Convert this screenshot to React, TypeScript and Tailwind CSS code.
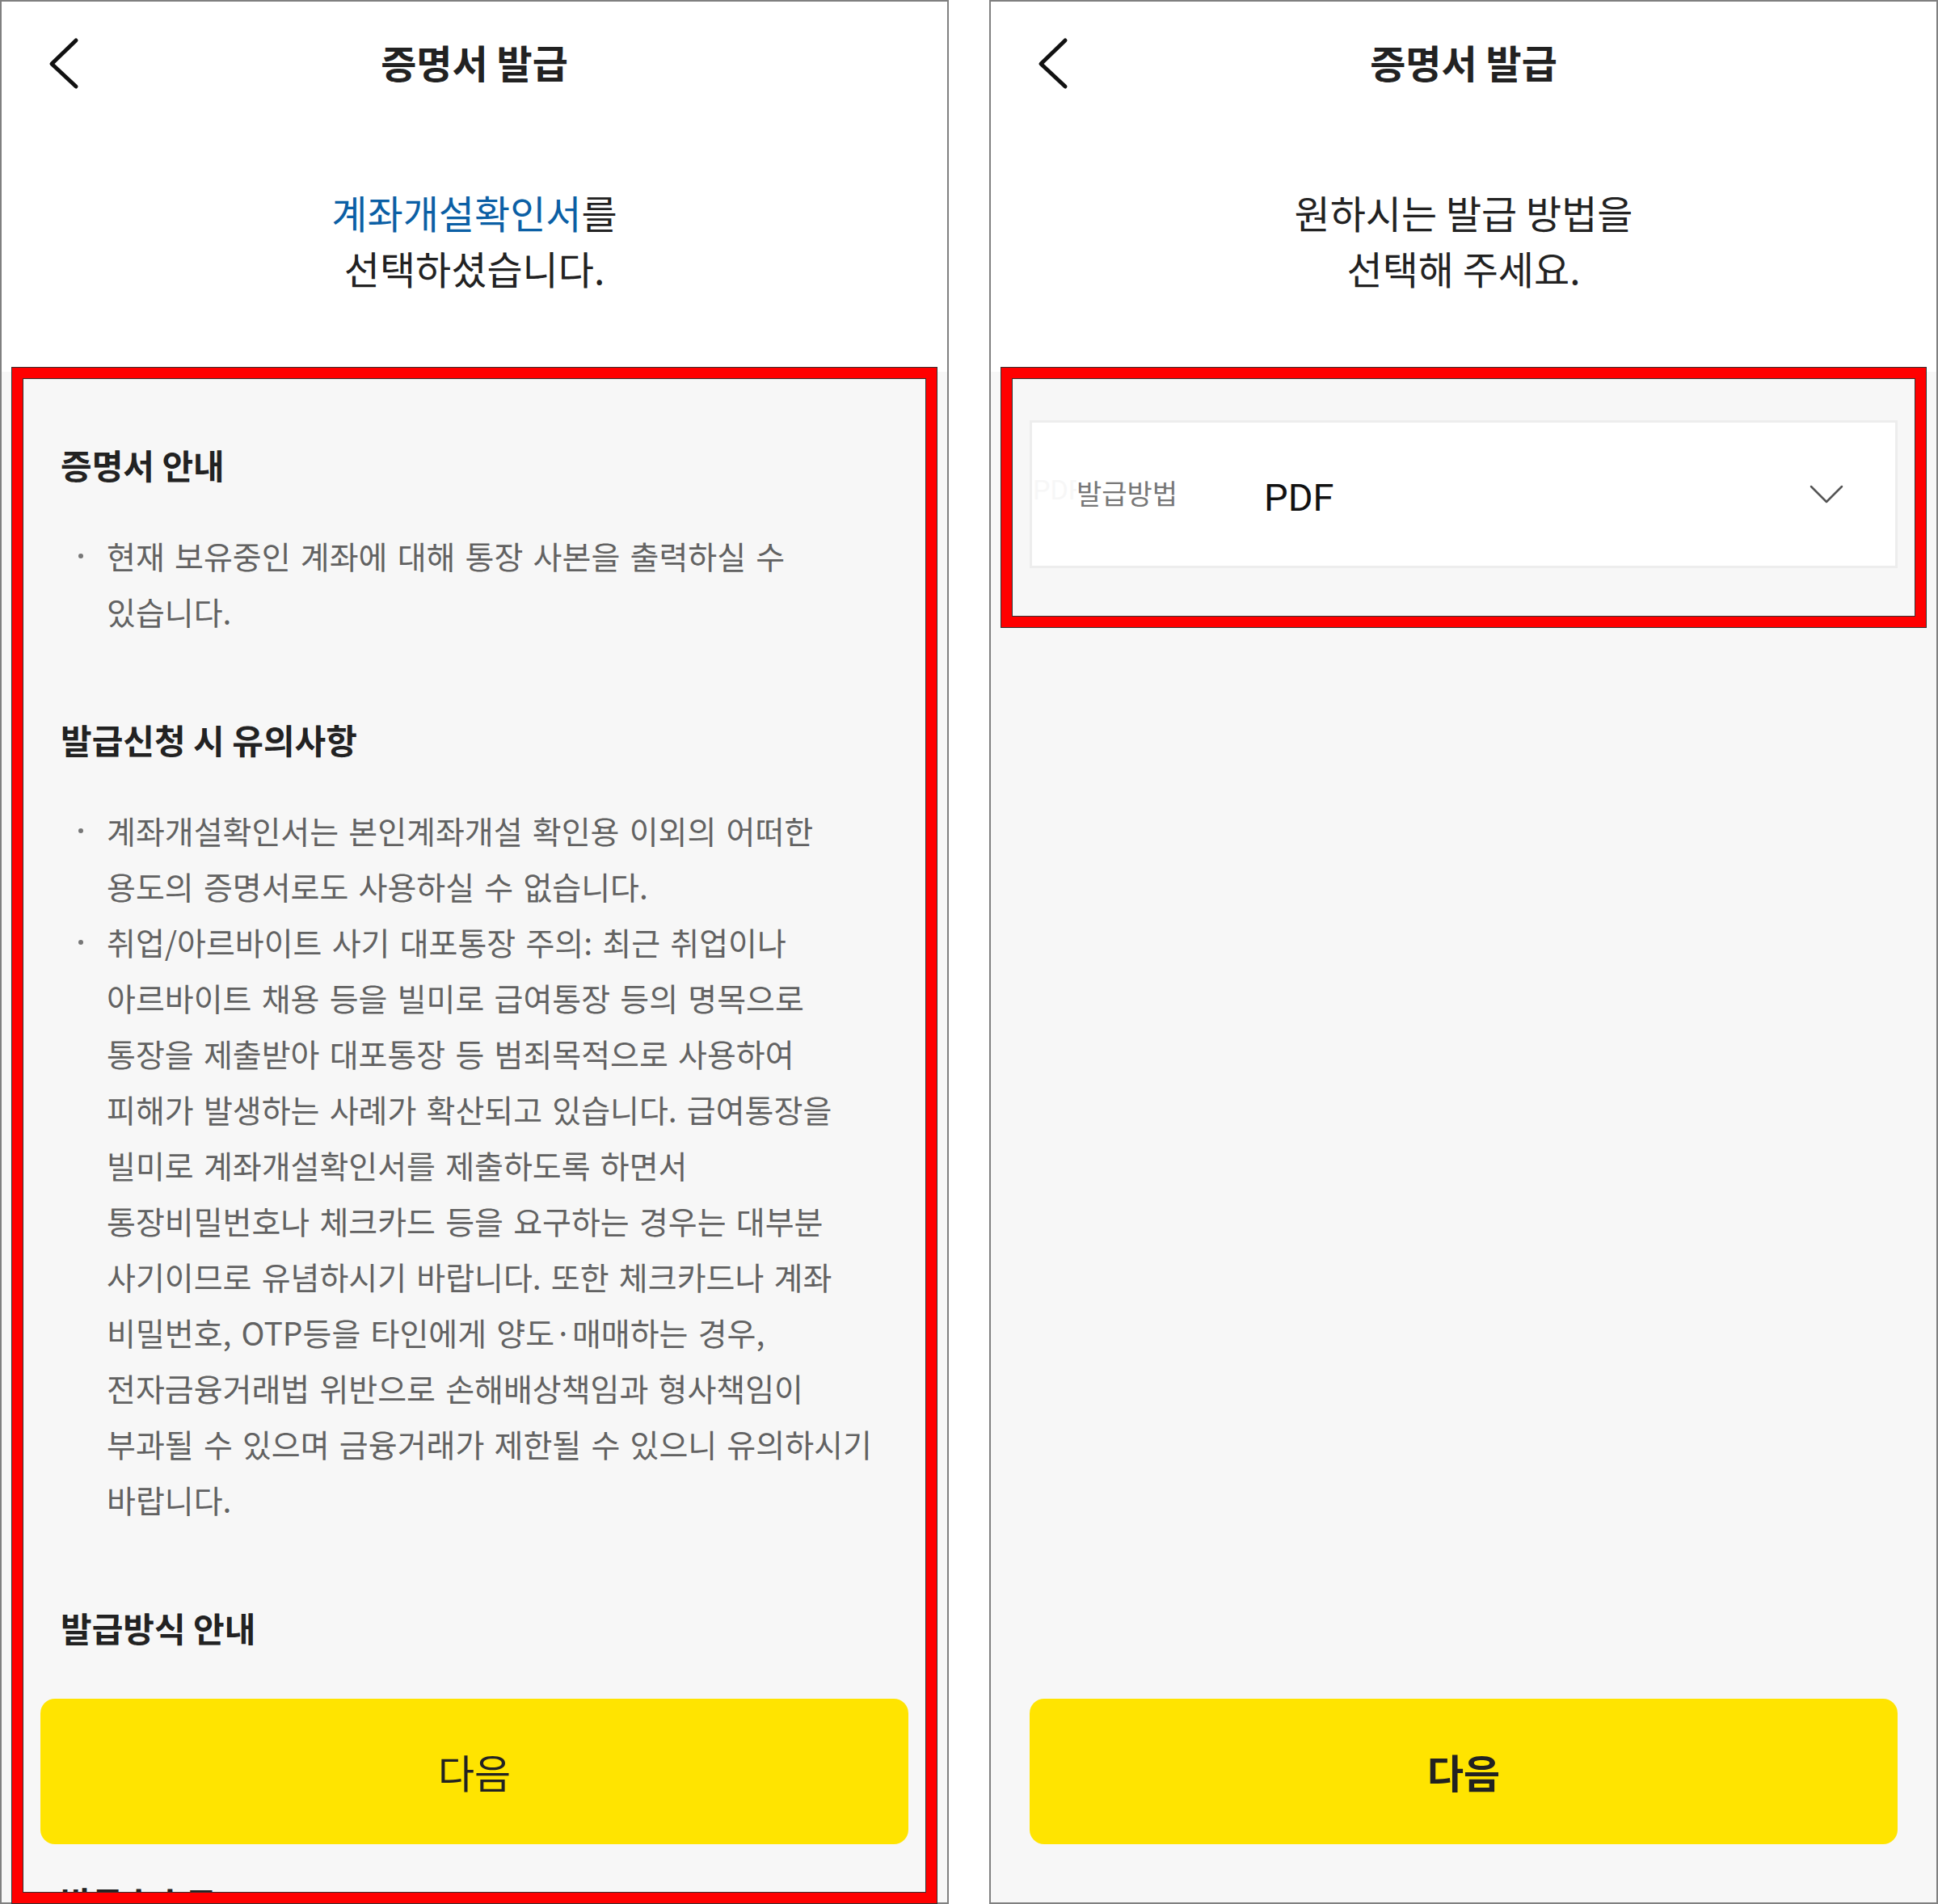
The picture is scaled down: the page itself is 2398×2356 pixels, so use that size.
import React from 'react';

type Section = { title: string; items: string[][]; hidden?: boolean };

const sections: Section[] = [
  {
    title: '증명서 안내',
    items: [['현재 보유중인 계좌에 대해 통장 사본을 출력하실 수', '있습니다.']],
  },
  {
    title: '발급신청 시 유의사항',
    items: [
      ['계좌개설확인서는 본인계좌개설 확인용 이외의 어떠한', '용도의 증명서로도 사용하실 수 없습니다.'],
      [
        '취업/아르바이트 사기 대포통장 주의: 최근 취업이나',
        '아르바이트 채용 등을 빌미로 급여통장 등의 명목으로',
        '통장을 제출받아 대포통장 등 범죄목적으로 사용하여',
        '피해가 발생하는 사례가 확산되고 있습니다. 급여통장을',
        '빌미로 계좌개설확인서를 제출하도록 하면서',
        '통장비밀번호나 체크카드 등을 요구하는 경우는 대부분',
        '사기이므로 유념하시기 바랍니다. 또한 체크카드나 계좌',
        '비밀번호, OTP등을 타인에게 양도·매매하는 경우,',
        '전자금융거래법 위반으로 손해배상책임과 형사책임이',
        '부과될 수 있으며 금융거래가 제한될 수 있으니 유의하시기',
        '바랍니다.',
      ],
    ],
  },
  {
    // body sits under the sticky button, so only the heading shows
    title: '발급방식 안내',
    items: [],
    hidden: true,
  },
  {
    title: '발급수수료',
    items: [],
  },
];

function BackIcon() {
  return (
    <svg width="42" height="70" viewBox="0 0 42 70" fill="none">
      <polyline points="36,9 6,38 36,66" stroke="#111" strokeWidth="5" strokeLinecap="round" strokeLinejoin="round" />
    </svg>
  );
}

function Header() {
  return (
    <div className="grid h-[148px] grid-cols-[1fr_auto_1fr] items-center">
      <div className="pl-[56px]">
        <BackIcon />
      </div>
      <h1 className="text-[48px] font-bold leading-none text-[#222]">증명서 발급</h1>
      <div />
    </div>
  );
}

function NextButton({ bold }: { bold?: boolean }) {
  return (
    <div
      className={
        bold
          ? 'absolute bottom-[72px] left-[48px] right-[48px] flex h-[180px] items-center justify-center rounded-[18px] bg-[#ffe400] text-[49px] font-bold text-[#222]'
          : 'absolute bottom-[72px] left-[48px] right-[48px] flex h-[180px] items-center justify-center rounded-[18px] bg-[#ffe400] text-[49px] text-[#222]'
      }
    >
      다음
    </div>
  );
}

function InfoPanel() {
  return (
    <div className="relative flex h-[2356px] w-[1174px] shrink-0 flex-col border-2 border-[#808080] bg-white">
      <div className="h-[458px] shrink-0">
        <Header />
        <div className="mt-[78px] text-center text-[48px] leading-[69px] text-[#222]">
          <p>
            <span className="text-[#0b5fa5]">계좌개설확인서</span>를
          </p>
          <p>선택하셨습니다.</p>
        </div>
      </div>
      <div className="flex flex-1 flex-col gap-[96px] overflow-hidden bg-[#f7f7f7] px-[73px] pt-[87px]">
        {sections.map((s) => (
          <div key={s.title}>
            <h2 className="text-[42px] font-bold leading-[56px] text-[#222]">{s.title}</h2>
            {s.hidden && <div className="mt-[50px] h-[138px]" />}
            {s.items.length > 0 && (
              <ul className="mt-[50px]">
                {s.items.map((lines, i) => (
                  <li key={i} className="flex items-start">
                    <span className="ml-[22px] mr-[29px] mt-[32px] h-[6px] w-[6px] shrink-0 rounded-full bg-[#777]" />
                    <div className="whitespace-nowrap text-[39px] leading-[69px] text-[#626262] [word-spacing:3.5px]">
                      {lines.map((l) => (
                        <div key={l}>{l}</div>
                      ))}
                    </div>
                  </li>
                ))}
              </ul>
            )}
          </div>
        ))}
      </div>
      <NextButton />
    </div>
  );
}

function MethodPanel() {
  return (
    <div className="relative flex h-[2356px] w-[1174px] shrink-0 flex-col border-2 border-[#808080] bg-white">
      <div className="h-[458px] shrink-0">
        <Header />
        <div className="mt-[78px] text-center text-[48px] leading-[69px] text-[#222]">
          <p>원하시는 발급 방법을</p>
          <p>선택해 주세요.</p>
        </div>
      </div>
      <div className="flex-1 bg-[#f7f7f7] px-[48px] pt-[60px]">
        <div className="relative flex h-[183px] items-center border-[3px] border-[#ededed] bg-white">
          <span className="absolute left-[1px] top-[66px] font-['Roboto'] text-[34px] leading-none text-[#f7f7f7]">PDF</span>
          <span className="relative ml-[55px] w-[232px] bg-white pb-[4px] text-[34px] leading-[42px] text-[#777]">
            발급방법
          </span>
          <span className="mt-[8px] font-['Roboto'] text-[47px] leading-none text-[#111]">PDF</span>
          <svg className="ml-auto mr-[64px]" width="42" height="24" viewBox="0 0 42 24" fill="none">
            <polyline points="2,2 21,21 40,2" stroke="#555" strokeWidth="2.5" strokeLinecap="round" strokeLinejoin="round" />
          </svg>
        </div>
      </div>
      <NextButton bold />
    </div>
  );
}

function Highlight({ className }: { className: string }) {
  return (
    <div className={className}>
      <div className="h-full w-full border-[13px] border-[#ff0000]">
        <div className="h-full w-full border border-[#333]" />
      </div>
    </div>
  );
}

export default function App() {
  return (
    <div className="relative flex h-[2356px] w-[2398px] gap-[50px] overflow-hidden bg-white font-['Noto_Sans_CJK_KR','Noto_Sans',sans-serif]">
      <InfoPanel />
      <MethodPanel />
      <Highlight className="pointer-events-none absolute left-[14px] top-[454px] h-[1902px] w-[1146px] border border-[#333]" />
      <Highlight className="pointer-events-none absolute left-[1238px] top-[454px] h-[323px] w-[1146px] border border-[#333]" />
    </div>
  );
}
